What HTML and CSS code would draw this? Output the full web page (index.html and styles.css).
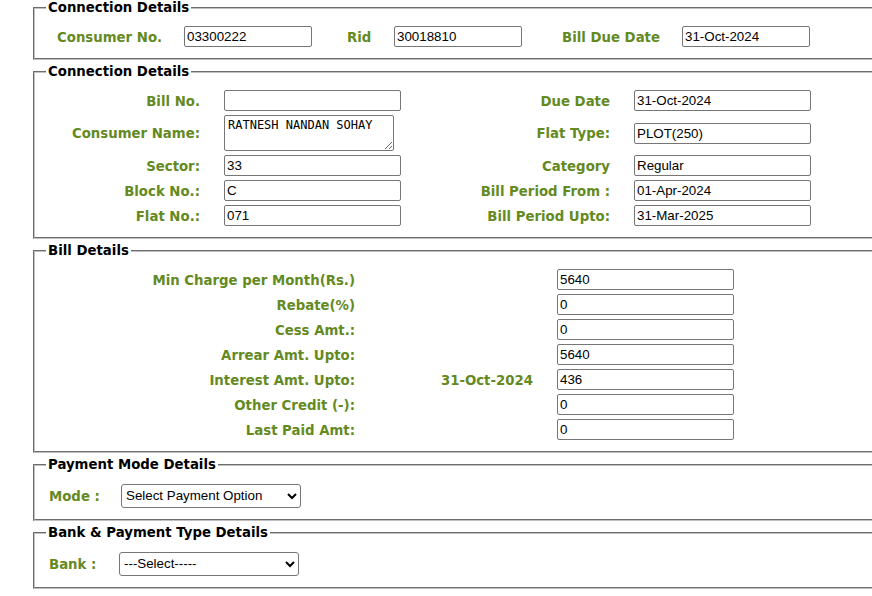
FILE: index.html
```html
<!DOCTYPE html>
<html>
<head>
<meta charset="utf-8">
<title>Bill Details</title>
<link rel="stylesheet" href="styles.css">
</head>
<body>
<div class="page">
  <fieldset class="box">
    <legend>Connection Details</legend>
    <div class="top-row">
      <label class="lbl tl1">Consumer No.</label>
      <input class="inp w128" type="text" value="03300222">
      <label class="lbl tl2">Rid</label>
      <input class="inp w128" type="text" value="30018810">
      <label class="lbl tl3">Bill Due Date</label>
      <input class="inp w128" type="text" value="31-Oct-2024">
    </div>
  </fieldset>

  <fieldset class="box">
    <legend>Connection Details</legend>
    <div class="conn-grid">
      <label class="lbl r">Bill No.</label>
      <input class="inp w177" type="text" value="">
      <label class="lbl r">Due Date</label>
      <input class="inp w177" type="text" value="31-Oct-2024">

      <label class="lbl r">Consumer Name:</label>
      <textarea class="ta">RATNESH NANDAN SOHAY</textarea>
      <label class="lbl r">Flat Type:</label>
      <input class="inp w177" type="text" value="PLOT(250)">

      <label class="lbl r">Sector:</label>
      <input class="inp w177" type="text" value="33">
      <label class="lbl r">Category</label>
      <input class="inp w177" type="text" value="Regular">

      <label class="lbl r">Block No.:</label>
      <input class="inp w177" type="text" value="C">
      <label class="lbl r">Bill Period From :</label>
      <input class="inp w177" type="text" value="01-Apr-2024">

      <label class="lbl r">Flat No.:</label>
      <input class="inp w177" type="text" value="071">
      <label class="lbl r">Bill Period Upto:</label>
      <input class="inp w177" type="text" value="31-Mar-2025">
    </div>
  </fieldset>

  <fieldset class="box">
    <legend>Bill Details</legend>
    <div class="bill-grid">
      <label class="lbl r">Min Charge per Month(Rs.)</label>
      <span></span>
      <input class="inp w177" type="text" value="5640">

      <label class="lbl r">Rebate(%)</label>
      <span></span>
      <input class="inp w177" type="text" value="0">

      <label class="lbl r">Cess Amt.:</label>
      <span></span>
      <input class="inp w177" type="text" value="0">

      <label class="lbl r">Arrear Amt. Upto:</label>
      <span></span>
      <input class="inp w177" type="text" value="5640">

      <label class="lbl r">Interest Amt. Upto:</label>
      <span class="lbl r">31-Oct-2024</span>
      <input class="inp w177" type="text" value="436">

      <label class="lbl r">Other Credit (-):</label>
      <span></span>
      <input class="inp w177" type="text" value="0">

      <label class="lbl r">Last Paid Amt:</label>
      <span></span>
      <input class="inp w177" type="text" value="0">
    </div>
  </fieldset>

  <fieldset class="box">
    <legend>Payment Mode Details</legend>
    <div class="sel-row">
      <label class="lbl mode-lbl">Mode :</label>
      <select class="sel">
        <option>Select Payment Option</option>
      </select>
    </div>
  </fieldset>

  <fieldset class="box">
    <legend>Bank &amp; Payment Type Details</legend>
    <div class="sel-row">
      <label class="lbl bank-lbl">Bank :</label>
      <select class="sel">
        <option>---Select-----</option>
      </select>
    </div>
  </fieldset>
</div>
</body>
</html>
```

FILE: styles.css
```css
html {
  overflow: hidden;
}

body {
  margin: 0;
  background: #ffffff;
  font-family: "DejaVu Sans", Verdana, sans-serif;
}

.page {
  padding-left: 33px;
  width: 920px;
}

.box {
  margin: 0 0 4px 0;
  padding: 10px 11px 11px 11px;
  border: 2px groove #c0c0c0;
  min-width: 0;
}

.box legend {
  padding: 0 2px;
  font-size: 13.3px;
  line-height: 16px;
  font-weight: bold;
  color: #000000;
}

.lbl {
  box-sizing: border-box;
  padding-top: 2px;
  font-size: 13.3px;
  font-weight: bold;
  color: #648a1f;
  white-space: nowrap;
  line-height: 16px;
}

.r {
  text-align: right;
}

.inp {
  box-sizing: border-box;
  height: 21px;
  margin: 0;
  padding: 1px 2px;
  border: 1px solid #767676;
  border-radius: 2px;
  font-family: "Liberation Sans", Arial, sans-serif;
  font-size: 13.333px;
  color: #000000;
  background: #ffffff;
}

.w128 {
  width: 128px;
}

.w177 {
  width: 177px;
}

.top-row {
  display: grid;
  grid-template-columns: 138px 128px 82px 128px 160px 128px;
  align-items: center;
}

.tl1 {
  padding-left: 11px;
}

.tl2 {
  padding-left: 35px;
}

.tl3 {
  padding-left: 40px;
}

.conn-grid {
  display: grid;
  grid-template-columns: 154px 177px 185px 177px;
  grid-template-rows: 21px 36px 21px 21px 21px;
  column-gap: 24px;
  row-gap: 4px;
  align-items: center;
}

.ta {
  box-sizing: border-box;
  width: 170px;
  height: 36px;
  margin: 0;
  padding: 2px 3px;
  border: 1px solid #767676;
  border-radius: 2px;
  font-family: "DejaVu Sans Mono", "Liberation Mono", monospace;
  font-size: 12px;
  line-height: 14px;
  color: #000000;
}

.bill-grid {
  display: grid;
  grid-template-columns: 309px 154px 177px;
  grid-auto-rows: 21px;
  column-gap: 24px;
  row-gap: 4px;
  align-items: center;
}

.sel-row {
  display: flex;
  align-items: center;
  height: 25px;
}

.mode-lbl {
  width: 75px;
  padding-left: 3px;
}

.bank-lbl {
  width: 73px;
  padding-left: 3px;
}

.sel {
  box-sizing: border-box;
  width: 180px;
  height: 24px;
  margin: 0;
  border: 1px solid #767676;
  border-radius: 3px;
  background: #ffffff;
  font-family: "Liberation Sans", Arial, sans-serif;
  font-size: 13.333px;
  color: #000000;
}
```
